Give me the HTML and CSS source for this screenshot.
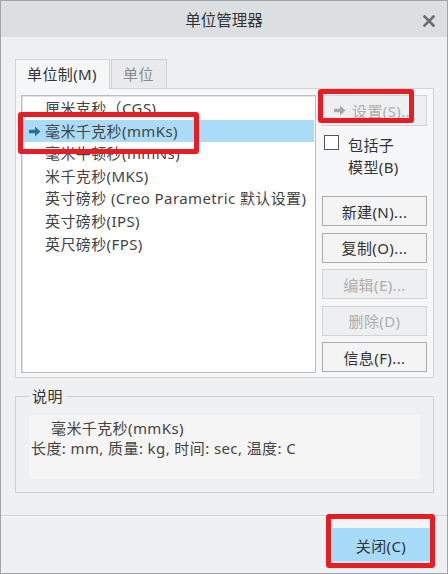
FILE: index.html
```html
<!DOCTYPE html>
<html>
<head>
<meta charset="utf-8">
<link rel="stylesheet" href="styles.css">
</head>
<body>
<div class="window">
  <div class="titlebar">
    <span class="title">单位管理器</span>
    <svg class="close" width="12" height="12" viewBox="0 0 12 12"><path d="M1.5 1.5 L10.5 10.5 M10.5 1.5 L1.5 10.5" stroke="#6b6b6b" stroke-width="2.6" stroke-linecap="square"/></svg>
  </div>
  <div class="main">
    <div class="tabs">
      <div class="tab active">单位制(M)</div>
      <div class="tab">单位</div>
    </div>
    <div class="panel">
      <div class="list">
        <div class="row">厘米克秒（CGS)</div>
        <div class="row selected"><svg class="arrow" width="12" height="11" viewBox="0 0 12 11"><path d="M0 3.8 H6 V0.5 L11.5 5.5 L6 10.5 V7.2 H0 Z" fill="#2c6f9c"/></svg>毫米千克秒(mmKs)</div>
        <div class="row">毫米牛顿秒(mmNs)</div>
        <div class="row">米千克秒(MKS)</div>
        <div class="row">英寸磅秒 (Creo Parametric 默认设置)</div>
        <div class="row">英寸磅秒(IPS)</div>
        <div class="row">英尺磅秒(FPS)</div>
      </div>
      <div class="side">
        <div class="btn disabled setbtn"><svg width="12" height="11" viewBox="0 0 12 11"><path d="M0 3.8 H6 V0.5 L11.5 5.5 L6 10.5 V7.2 H0 Z" fill="#a8a8a8"/></svg><span>设置(S)...</span></div>
        <div class="check"><span class="box"></span><span class="check-label">包括子<br>模型(B)</span></div>
        <div class="btns">
          <div class="btn">新建(N)...</div>
          <div class="btn">复制(O)...</div>
          <div class="btn disabled">编辑(E)...</div>
          <div class="btn disabled">删除(D)</div>
          <div class="btn">信息(F)...</div>
        </div>
      </div>
    </div>
    <fieldset class="desc">
      <legend>说明</legend>
      <div class="desc-box">
        <div class="desc-l1">毫米千克秒(mmKs)</div>
        <div>长度: mm, 质量: kg, 时间: sec, 温度: C</div>
      </div>
    </fieldset>
  </div>
  <div class="footer">
    <div class="closebtn">关闭(C)</div>
  </div>
  <div class="redbox rb1"></div>
  <div class="redbox rb2"></div>
  <div class="redbox rb3"></div>
</div>
</body>
</html>
```
FILE: styles.css
```css
* { box-sizing: border-box; }
html, body { margin: 0; padding: 0; background: #eff0f2; }
body {
  font-family: "Noto Sans", "Noto Sans CJK SC", sans-serif;
  font-size: 15px;
  letter-spacing: 0.4px;
  color: #3d3d3d;
}
.window {
  position: relative;
  width: 448px;
  height: 574px;
  border: 1px solid #a3a3a3;
  background: #eff0f2;
  display: flex;
  flex-direction: column;
}
.titlebar {
  height: 36px;
  background: #dcdfe1;
  display: flex;
  align-items: center;
  justify-content: center;
  position: relative;
  flex: none;
}
.title { font-size: 15.5px; color: #333; line-height: 20px; margin-top: 1px; letter-spacing: 0; }
.close { position: absolute; right: 12px; top: 14px; }
.main {
  flex: none;
  height: 479px;
  padding: 22px 0 0 14px;
  border-bottom: 1px solid #cfd0d2;
}
.tabs { display: flex; align-items: flex-end; height: 29px; }
.tab {
  height: 29px;
  padding: 0 11px;
  border: 1px solid #d2d3d5;
  border-bottom: none;
  background: #e9eaec;
  color: #8a8a8a;
  line-height: 28px;
  margin-left: 1px;
  width: 56px;
  white-space: nowrap;
}
.tab.active {
  width: 95px;
  height: 30px;
  margin-left: 0;
  margin-bottom: -1px;
  background: #f6f7f8;
  color: #333;
  position: relative;
  z-index: 1;
  line-height: 29px;
}
.panel {
  width: 419px;
  height: 290px;
  border: 1px solid #d2d3d5;
  background: #f6f7f8;
  padding: 6px 5px 4px 5px;
  display: flex;
  gap: 6px;
}
.list {
  width: 295px;
  height: 278px;
  background: #fff;
  border: 1px solid #bdbdbd;
  box-shadow: inset 1px 1px 0 #e2e2e2;
  padding-top: 1px;
  flex: none;
}
.row {
  height: 22.6px;
  line-height: 22.6px;
  padding-left: 23px;
  color: #444;
  white-space: nowrap;
  position: relative;
}
.row.selected { background: #aadcf7; margin: 0 1px 0 1px; padding-left: 22px; }
.arrow { position: absolute; left: 6px; top: 6px; }
.side { width: 105px; flex: none; display: flex; flex-direction: column; }
.btn {
  height: 30px;
  border: 1px solid #adadad;
  background: #f4f4f5;
  display: flex;
  align-items: center;
  justify-content: center;
  color: #333;
  white-space: nowrap;
}
.btn.disabled { border-color: #d3d3d3; color: #adadad; background: #eeeff0; }
.setbtn { height: 31px; gap: 6px; background: #e8e9ea; justify-content: flex-start; padding-left: 11px; }
.check { display: flex; margin-top: 9px; height: 61px; }
.box {
  width: 15px; height: 15px;
  border: 1px solid #555;
  background: #fff;
  margin-left: 2px;
  flex: none;
}
.check-label { margin-left: 9px; line-height: 22px; margin-top: -1px; color: #333; }
.btns { display: flex; flex-direction: column; gap: 6.5px; }
.desc {
  margin: 8px 0 0 0;
  width: 419px;
  border: 1px solid #cfd0d2;
  padding: 9px 13px 13px 13px;
  min-width: 0;
}
.desc legend { padding: 0 3px; margin-left: 0; line-height: 20px; color: #333; }
.desc-box {
  background: #f5f5f5;
  height: 64px;
  padding: 3px 2px 0 2px;
  line-height: 20px;
  color: #444;
  white-space: nowrap;
}
.desc-l1 { padding-left: 20px; }
.footer {
  flex: 1;
  border-top: 1px solid #fbfbfb;
  display: flex;
  justify-content: flex-end;
  padding: 2px 17px 0 0;
}
.closebtn {
  width: 98px;
  height: 44px;
  background: linear-gradient(#f3f4f5 0, #f3f4f5 9px, #a6dcf9 9px, #a6dcf9 42px, #cdeafa 42px);
  display: flex;
  align-items: center;
  justify-content: center;
  padding-top: 9px;
  color: #333;
}
.redbox {
  position: absolute;
  border: 5px solid #e51d25;
  border-radius: 3px;
}
.rb1 { left: 17px; top: 111px; width: 181px; height: 42px; }
.rb2 { left: 317px; top: 88px; width: 96px; height: 34px; }
.rb3 { left: 325px; top: 513px; width: 109px; height: 54px; }
```
